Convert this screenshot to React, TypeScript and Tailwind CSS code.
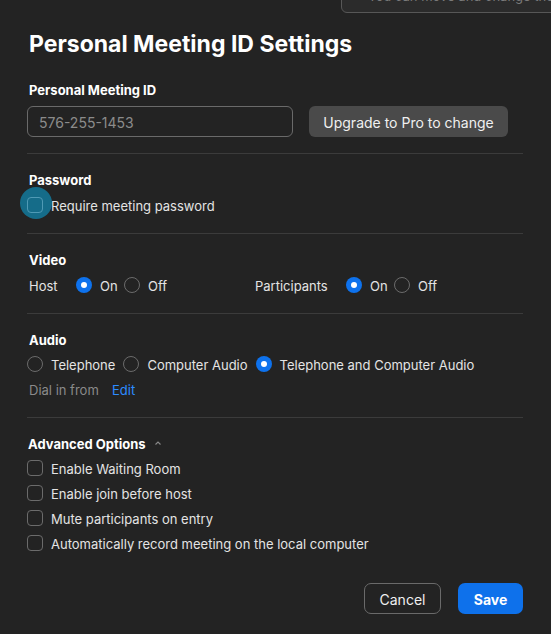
import React from "react";

function Checkbox() {
  return <div className="w-4 h-4 rounded-[4px] border border-[#6b6b6b] shrink-0" />;
}

function Radio({ on }: { on?: boolean }) {
  return on ? (
    <div className="w-4 h-4 rounded-full bg-[#0e72ed] flex items-center justify-center shrink-0">
      <div className="w-[6px] h-[6px] rounded-full bg-white" />
    </div>
  ) : (
    <div className="w-4 h-4 rounded-full border border-[#6b6b6b] shrink-0" />
  );
}

function Sep() {
  return <div className="h-px bg-[#3b3b3b]" />;
}

function T({ children, className = "" }: { children: React.ReactNode; className?: string }) {
  return <span className={"pt-[1px] leading-[16px] " + className}>{children}</span>;
}

export default function App() {
  return (
    <div
      className="relative w-[551px] h-[634px] bg-[#232323] overflow-hidden text-[#e4e4e4]"
      style={{ fontFamily: "Inter, 'Noto Sans', sans-serif" }}
    >
      {/* tooltip fragment */}
      <div className="absolute left-[341px] top-[-20px] w-[240px] h-[33px] bg-[#2b2b2b] border border-[#575757] rounded-[6px] pl-[26px] pt-[6px] text-[13px] text-[#7a7a7a] whitespace-nowrap">
        You can move and change the
      </div>

      <div className="pl-[27px] pr-[28px] pt-[30px]">
        <div className="text-[23px] leading-[28px] font-bold text-white pl-[2px]">
          Personal Meeting ID Settings
        </div>

        <div className="mt-[24px] text-[13px] leading-[16px] font-bold text-white pl-[2px]">
          Personal Meeting ID
        </div>
        <div className="mt-[8px] flex gap-[16px]">
          <div className="w-[266px] h-[31px] rounded-[6px] border border-[#6a6a6a] flex items-center pl-[11px] pt-[2px] text-[14px] text-[#8b8b8b]">
            576-255-1453
          </div>
          <div className="w-[199px] h-[31px] rounded-[6px] bg-[#4a4a4a] flex items-center justify-center pt-[2px] text-[14px] text-[#f0f0f0]">
            Upgrade to Pro to change
          </div>
        </div>

        <div className="mt-[16px]">
          <Sep />
        </div>

        <div className="mt-[18px] text-[13px] leading-[16px] font-bold text-white pl-[2px]">Password</div>
        <div className="mt-[9px] flex items-center h-4 text-[13px]">
          <div className="relative w-4 h-4 shrink-0">
            <div className="absolute left-[-7px] top-[-10px] w-[32px] h-[32px] rounded-full bg-[#156c89]" />
            <div className="absolute inset-0 rounded-[4px] border border-[#4f9ab5]" />
          </div>
          <T className="ml-[8px]">Require meeting password</T>
        </div>

        <div className="mt-[20px]">
          <Sep />
        </div>

        <div className="mt-[18px] text-[13px] leading-[16px] font-bold text-white pl-[2px]">Video</div>
        <div className="mt-[9px] flex items-center h-4 text-[13px]">
          <T className="pl-[2px] w-[49px]">Host</T>
          <Radio on />
          <T className="ml-[8px] w-[24px]">On</T>
          <Radio />
          <T className="ml-[8px] w-[107px]">Off</T>
          <T className="w-[91px]">Participants</T>
          <Radio on />
          <T className="ml-[8px] w-[24px]">On</T>
          <Radio />
          <T className="ml-[8px]">Off</T>
        </div>

        <div className="mt-[20px]">
          <Sep />
        </div>

        <div className="mt-[18px] text-[13px] leading-[16px] font-bold text-white pl-[2px]">Audio</div>
        <div className="mt-[8px] flex items-center h-4 text-[13px]">
          <Radio />
          <T className="ml-[8px] mr-[8px]">Telephone</T>
          <Radio />
          <T className="ml-[8px] mr-[8px]">Computer Audio</T>
          <Radio on />
          <T className="ml-[8px]">Telephone and Computer Audio</T>
        </div>
        <div className="mt-[9px] flex items-center h-4 text-[13px] pl-[2px]">
          <T className="text-[#8a8a8a] w-[83px]">Dial in from</T>
          <T className="text-[#2d8cff]">Edit</T>
        </div>

        <div className="mt-[20px]">
          <Sep />
        </div>

        <div className="mt-[17px] flex items-center h-4 text-[13px] pl-[1px]">
          <T className="font-bold text-white">Advanced Options</T>
          <svg className="ml-[8px]" width="8" height="6" viewBox="0 0 8 6">
            <path d="M1.5 4.5 L4 2 L6.5 4.5" fill="none" stroke="#8a8a8a" strokeWidth="1.1" />
          </svg>
        </div>
        <div className="mt-[9px] flex flex-col gap-[9px] text-[13px]">
          {[
            "Enable Waiting Room",
            "Enable join before host",
            "Mute participants on entry",
            "Automatically record meeting on the local computer",
          ].map((t) => (
            <div key={t} className="flex items-center h-4">
              <Checkbox />
              <T className="ml-[8px]">{t}</T>
            </div>
          ))}
        </div>

        <div className="mt-[32px] flex justify-end gap-[17px]">
          <div className="w-[77px] h-[31px] rounded-[7px] border border-[#6a6a6a] flex items-center justify-center pt-[2px] text-[14px] text-[#f0f0f0]">
            Cancel
          </div>
          <div className="w-[65px] h-[31px] rounded-[7px] bg-[#0e71eb] flex items-center justify-center pt-[2px] text-[14px] font-bold text-white">
            Save
          </div>
        </div>
      </div>
    </div>
  );
}
